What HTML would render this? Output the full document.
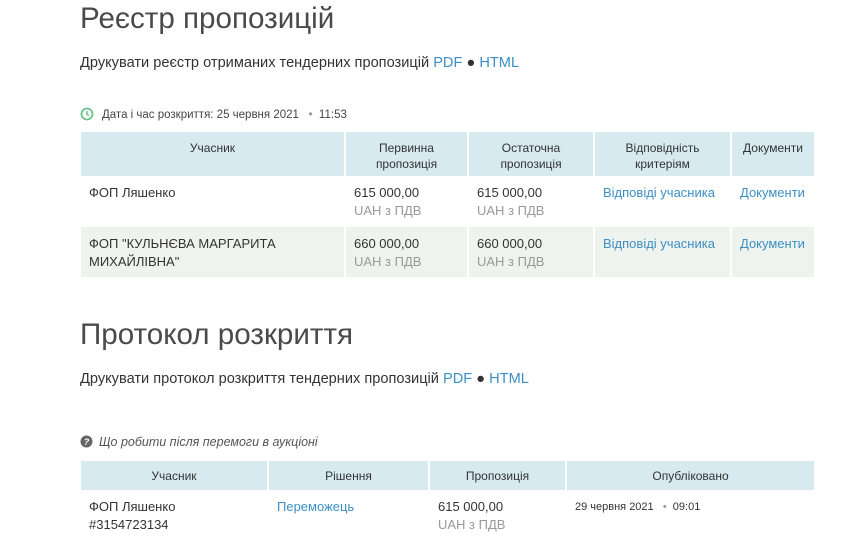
<!DOCTYPE html>
<html><head><meta charset="utf-8"><style>
body{margin:0;width:857px;height:546px;overflow:hidden;background:#fff;font-family:"Liberation Sans",sans-serif;color:#333;position:relative}
.a{position:absolute}
h1{position:absolute;margin:0;font-weight:normal;font-size:29.6px;color:#4a4a4a;left:80px}
.p{left:80px;font-size:14.6px;color:#333}
a{color:#3d8fc2;text-decoration:none}
table{position:absolute;border-collapse:collapse;font-size:13px;table-layout:fixed}
th{background:#d6eaf0;font-weight:normal;color:#333;font-size:12px;border-left:2px solid #fff;vertical-align:top;padding-top:8px;line-height:16px}
th:first-child{border-left:none}
td{border-left:2px solid #fff;vertical-align:top;padding:8px 8px 0 8px;line-height:18px;font-size:13px}
td:first-child{border-left:none}
.g{color:#999}
tr.alt td{background:#eff3f0}
</style></head><body>
<h1 style="top:2px">Реєстр пропозицій</h1>
<div class="a p" style="top:55px">Друкувати реєстр отриманих тендерних пропозицій <a>PDF</a> ● <a>HTML</a></div>
<div class="a" style="left:80px;top:107px;font-size:11.5px;color:#444"><svg width="14" height="14" style="vertical-align:-3px;margin-right:8px"><circle cx="7" cy="7" r="5.5" fill="none" stroke="#6cc38a" stroke-width="1.8"/><path d="M7 4v3.3l2 1.3" fill="none" stroke="#6cc38a" stroke-width="1.5"/></svg>Дата і час розкриття: 25 червня 2021 &nbsp; <span style="color:#999">•</span> &nbsp;11:53</div>
<table style="left:81px;top:132px;width:733px">
<colgroup><col style="width:264px"><col style="width:123px"><col style="width:126px"><col style="width:137px"><col></colgroup>
<tr style="height:44px"><th>Учасник</th><th>Первинна<br>пропозиція</th><th>Остаточна<br>пропозиція</th><th>Відповідність<br>критеріям</th><th>Документи</th></tr>
<tr style="height:51px"><td>ФОП Ляшенко</td><td>615 000,00<br><span class="g">UAH з ПДВ</span></td><td>615 000,00<br><span class="g">UAH з ПДВ</span></td><td><a>Відповіді учасника</a></td><td><a>Документи</a></td></tr>
<tr class="alt" style="height:50px"><td>ФОП "КУЛЬНЄВА МАРГАРИТА<br>МИХАЙЛІВНА"</td><td>660 000,00<br><span class="g">UAH з ПДВ</span></td><td>660 000,00<br><span class="g">UAH з ПДВ</span></td><td><a>Відповіді учасника</a></td><td><a>Документи</a></td></tr>
</table>
<h1 style="top:318px">Протокол розкриття</h1>
<div class="a p" style="top:371px">Друкувати протокол розкриття тендерних пропозицій <a>PDF</a> ● <a>HTML</a></div>
<div class="a" style="left:80px;top:435px;font-size:12.5px;color:#555;font-style:italic"><svg width="13" height="13" style="vertical-align:-2px;margin-right:6px"><circle cx="6.5" cy="6.5" r="6" fill="#666"/><text x="6.5" y="10" font-size="9" font-weight="bold" text-anchor="middle" fill="#fff" font-family="Liberation Sans">?</text></svg>Що робити після перемоги в аукціоні</div>
<table style="left:81px;top:461px;width:733px">
<colgroup><col style="width:187px"><col style="width:161px"><col style="width:137px"><col></colgroup>
<tr style="height:29px"><th style="padding-top:7px">Учасник</th><th style="padding-top:7px">Рішення</th><th style="padding-top:7px">Пропозиція</th><th style="padding-top:7px">Опубліковано</th></tr>
<tr><td>ФОП Ляшенко<br>#3154723134</td><td><a>Переможець</a></td><td>615 000,00<br><span class="g">UAH з ПДВ</span></td><td style="font-size:11px">29 червня 2021 &nbsp; <span style="color:#999">•</span> &nbsp;09:01</td></tr>
</table>
</body></html>
